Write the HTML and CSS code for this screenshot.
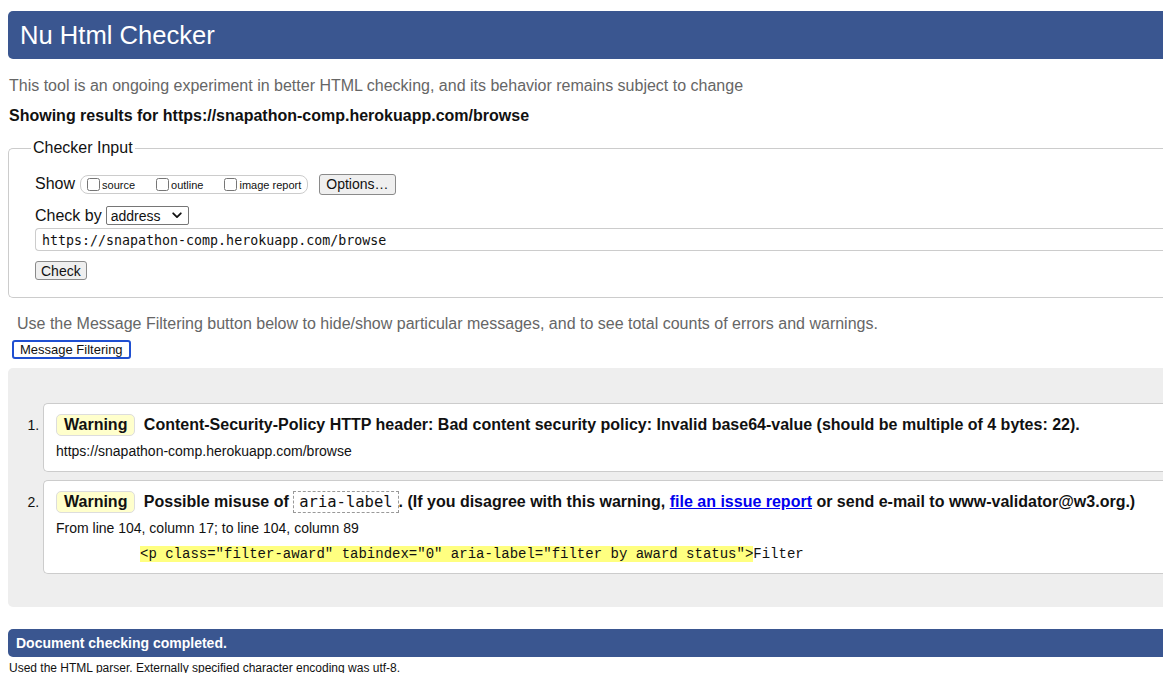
FILE: index.html
```html
<!DOCTYPE html>
<html lang="en">
<head>
<meta charset="utf-8">
<title>Showing results for https://snapathon-comp.herokuapp.com/browse - Nu Html Checker</title>
<link rel="stylesheet" href="styles.css">
</head>
<body>
<h1 class="title">Nu Html Checker</h1>
<p class="intro">This tool is an ongoing experiment in better HTML checking, and its behavior remains subject to change</p>
<p class="showing">Showing results for https://snapathon-comp.herokuapp.com/browse</p>

<fieldset class="checker">
  <legend class="legend">Checker Input</legend>
  <div class="row row-show">
    <span class="row-label">Show</span>
    <span class="group">
      <label class="opt"><input type="checkbox" class="cb">source</label>
      <label class="opt"><input type="checkbox" class="cb">outline</label>
      <label class="opt"><input type="checkbox" class="cb">image report</label>
    </span>
    <button class="btn btn-options" type="button">Options…</button>
  </div>
  <div class="row row-by">
    <span class="row-label">Check by</span>
    <span class="select">
      <span class="select-text">address</span>
      <svg class="chev" width="10" height="7" viewBox="0 0 10 7"><path d="M1.2 1.3 L5 5.1 L8.8 1.3" fill="none" stroke="#111" stroke-width="1.8" stroke-linecap="round" stroke-linejoin="round"/></svg>
    </span>
  </div>
  <div class="url">https://snapathon-comp.herokuapp.com/browse</div>
  <button class="btn btn-check" type="button">Check</button>
</fieldset>

<p class="filter-note">Use the Message Filtering button below to hide/show particular messages, and to see total counts of errors and warnings.</p>
<button class="btn-filter" type="button">Message Filtering</button>

<div class="results">
  <ol class="messages">
    <li class="msg">
      <p class="msg-line"><span class="badge">Warning</span> Content-Security-Policy HTTP header: Bad content security policy: Invalid base64-value (should be multiple of 4 bytes: 22).</p>
      <p class="loc">https://snapathon-comp.herokuapp.com/browse</p>
    </li>
    <li class="msg">
      <p class="msg-line"><span class="badge">Warning</span> Possible misuse of <code class="icode">aria-label</code>. (If you disagree with this warning, <a class="link" href="#">file an issue report</a> or send e-mail to www-validator@w3.org.)</p>
      <p class="loc">From line 104, column 17; to line 104, column 89</p>
      <p class="extract"><mark class="hl">&lt;p class="filter-award" tabindex="0" aria-label="filter by award status"&gt;</mark>Filter</p>
    </li>
  </ol>
</div>

<h2 class="done">Document checking completed.</h2>
<p class="parser">Used the HTML parser. Externally specified character encoding was utf-8.</p>
</body>
</html>
```
FILE: styles.css
```css
html {
  overflow: hidden;
}
body {
  margin: 0 1px 0 8px;
  font-family: "Liberation Sans", Arial, Helvetica, sans-serif;
  font-size: 16px;
  color: #111;
  background: #fff;
}
.title {
  margin: 11px 0 0 0;
  height: 48px;
  line-height: 48px;
  padding-left: 12px;
  font-size: 25.6px;
  font-weight: normal;
  color: #fff;
  background: #3a5690;
  border-radius: 5px 0 0 5px;
}
.intro {
  margin: 18px 0 0 1px;
  line-height: 18px;
  color: #666;
}
.showing {
  margin: 12px 0 0 1px;
  line-height: 18px;
  font-weight: bold;
}
.checker {
  margin: 14px 0 0 0;
  padding: 0 0 17px 26px;
  border: 1px solid #ccc;
  border-right: none;
  border-radius: 5px 0 0 5px;
}
.legend {
  margin-left: -4px;
  padding: 0 2px;
  line-height: 18px;
}
.row {
  display: flex;
  align-items: center;
}
.row-show {
  margin-top: 16px;
  height: 22px;
}
.row-label {
  line-height: 18px;
}
.group {
  display: inline-flex;
  align-items: center;
  margin-left: 5px;
  height: 17px;
  padding: 0 6px 0 6px;
  border: 1px solid #ccc;
  border-radius: 8px;
  font-size: 11px;
}
.opt {
  display: inline-flex;
  align-items: flex-end;
  margin-right: 21px;
}
.opt:last-child {
  margin-right: 0;
}
.cb {
  margin: 0 2px 0 0;
  width: 13px;
  height: 13px;
}
.btn {
  font-family: "Liberation Sans", Arial, sans-serif;
  font-size: 14px;
  color: #111;
  background: #efefef;
  border: 1px solid #8a8a8a;
  border-radius: 3px;
  padding: 0 7px;
}
.btn-options {
  margin-left: 11px;
  height: 21px;
  padding: 0 6px;
}
.row-by {
  margin-top: 11px;
  height: 19px;
}
.select {
  display: inline-flex;
  align-items: center;
  justify-content: space-between;
  margin-left: 4px;
  width: 83px;
  height: 19px;
  box-sizing: border-box;
  padding: 0 6px 0 4px;
  border: 1px solid #767676;
  border-radius: 2px;
  font-size: 14px;
}
.chev {
  display: block;
}
.url {
  margin-top: 3px;
  height: 23px;
  line-height: 23px;
  box-sizing: border-box;
  padding-left: 6px;
  border: 1px solid #ccc;
  border-right: none;
  border-radius: 4px 0 0 4px;
  font-family: "DejaVu Sans Mono", monospace;
  font-size: 13.3px;
}
.btn-check {
  display: block;
  margin-top: 10px;
  height: 19px;
  padding: 0 5px;
}
.filter-note {
  margin: 17px 0 0 9px;
  line-height: 18px;
  color: #666;
}
.btn-filter {
  display: block;
  margin: 7px 0 0 4px;
  height: 19px;
  padding: 0 6px;
  font-family: "Liberation Sans", Arial, sans-serif;
  font-size: 13px;
  color: #111;
  background: #fff;
  border: 2px solid #1f4fd1;
  border-radius: 3px;
}
.results {
  margin-top: 9px;
  padding: 35px 0 33px 0;
  background: #eee;
  border-radius: 5px 0 0 5px;
}
.messages {
  margin: 0;
  padding: 0 0 0 35px;
  font-size: 14px;
}
.msg {
  padding: 10px 0 11px 12px;
  background: #fff;
  border: 1px solid #ccc;
  border-right: none;
  border-radius: 5px 0 0 5px;
}
.msg + .msg {
  margin-top: 8px;
  padding-bottom: 10px;
}
.msg::marker {
  font-size: 14px;
}
.msg-line {
  margin: 0;
  line-height: 22px;
  font-size: 16px;
  font-weight: bold;
}
.badge {
  display: inline-block;
  line-height: 20px;
  padding: 0 7px;
  margin-right: 4px;
  background: #ffffcc;
  border: 1px solid #ddd;
  border-radius: 5px;
}
.icode {
  font-family: "DejaVu Sans Mono", monospace;
  font-weight: normal;
  font-size: 15.5px;
  padding: 1px 5px;
  border: 1px dashed #999;
}
.link {
  color: #0000ee;
  text-decoration: underline;
}
.loc {
  margin: 6px 0 0 0;
  line-height: 18px;
  font-size: 14px;
}
.extract {
  margin: 8px 0 0 84px;
  line-height: 18px;
  font-family: "Liberation Mono", "Courier New", monospace;
  font-size: 14px;
}
.hl {
  background: #ffff80;
  color: #111;
}
.done {
  margin: 22px 0 0 0;
  height: 28px;
  line-height: 28px;
  padding-left: 8px;
  font-size: 14px;
  font-weight: bold;
  color: #fff;
  background: #3a5690;
  border-radius: 5px 0 0 5px;
}
.parser {
  margin: 4px 0 0 1px;
  font-size: 12px;
  line-height: 14px;
}
```
